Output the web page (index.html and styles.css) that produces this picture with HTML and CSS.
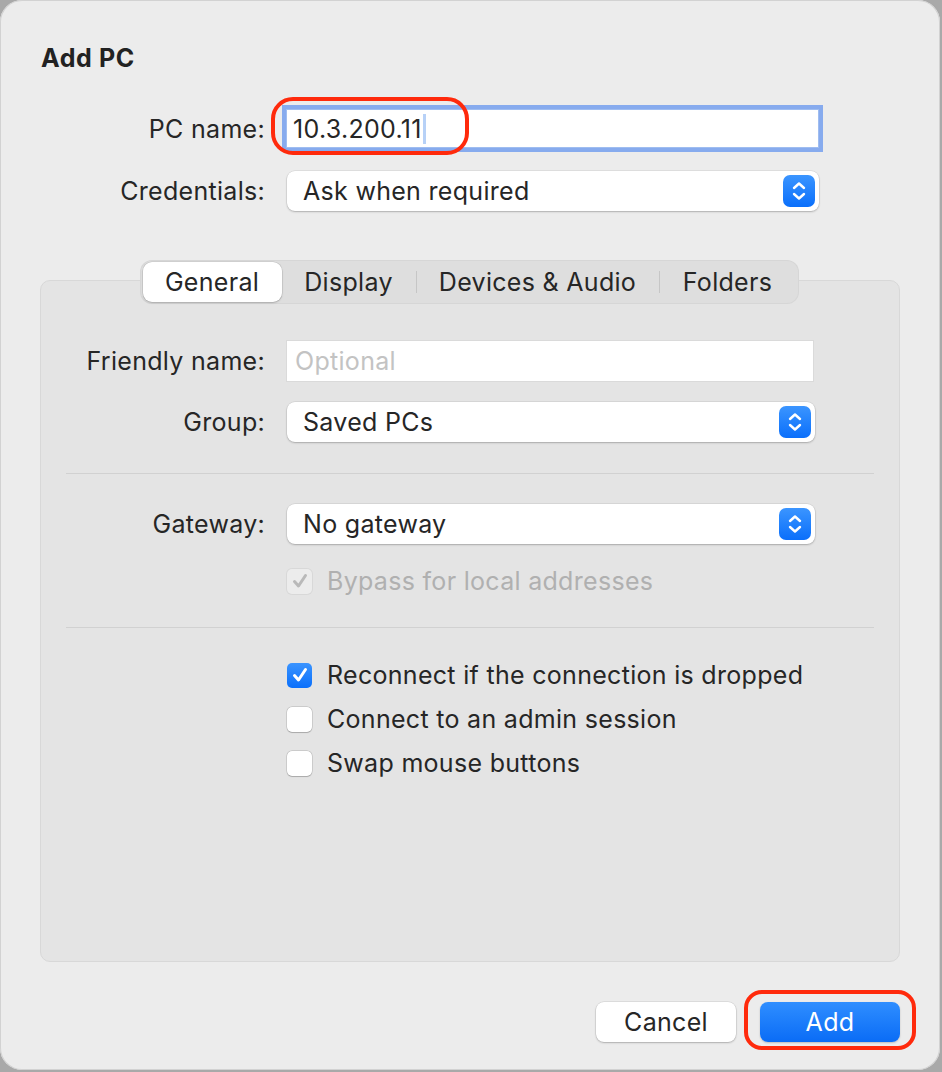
FILE: index.html
```html
<!DOCTYPE html>
<html>
<head>
<meta charset="utf-8">
<link rel="stylesheet" href="styles.css">
</head>
<body>
<div class="window">
  <div class="title">Add PC</div>

  <div class="row row-pc">
    <div class="label">PC name:</div>
    <div class="field-wrap">
      <div class="textfield focused"><span class="val">10.3.200.11</span><span class="caret"></span></div>
      <div class="annot annot-pc"></div>
    </div>
  </div>

  <div class="row row-cred">
    <div class="label">Credentials:</div>
    <div class="popup popup-wide">
      <span class="popup-text">Ask when required</span>
      <span class="stepper"><svg width="16" height="22" viewBox="0 0 16 22"><path d="M3 8 L8 3.5 L13 8" fill="none" stroke="#fff" stroke-width="2.4" stroke-linecap="round" stroke-linejoin="round"/><path d="M3 14 L8 18.5 L13 14" fill="none" stroke="#fff" stroke-width="2.4" stroke-linecap="round" stroke-linejoin="round"/></svg></span>
    </div>
  </div>

  <div class="panel">
    <div class="tabs">
      <div class="tab tab-general selected">General</div>
      <div class="tab tab-display">Display</div>
      <div class="sep"></div>
      <div class="tab tab-devices">Devices &amp; Audio</div>
      <div class="sep"></div>
      <div class="tab tab-folders">Folders</div>
    </div>

    <div class="prow prow-friendly">
      <div class="plabel">Friendly name:</div>
      <div class="plain-field"><span class="placeholder">Optional</span></div>
    </div>

    <div class="prow prow-group">
      <div class="plabel">Group:</div>
      <div class="popup popup-panel">
        <span class="popup-text">Saved PCs</span>
        <span class="stepper"><svg width="16" height="22" viewBox="0 0 16 22"><path d="M3 8 L8 3.5 L13 8" fill="none" stroke="#fff" stroke-width="2.4" stroke-linecap="round" stroke-linejoin="round"/><path d="M3 14 L8 18.5 L13 14" fill="none" stroke="#fff" stroke-width="2.4" stroke-linecap="round" stroke-linejoin="round"/></svg></span>
      </div>
    </div>

    <div class="divider divider-1"></div>

    <div class="prow prow-gateway">
      <div class="plabel">Gateway:</div>
      <div class="popup popup-panel">
        <span class="popup-text">No gateway</span>
        <span class="stepper"><svg width="16" height="22" viewBox="0 0 16 22"><path d="M3 8 L8 3.5 L13 8" fill="none" stroke="#fff" stroke-width="2.4" stroke-linecap="round" stroke-linejoin="round"/><path d="M3 14 L8 18.5 L13 14" fill="none" stroke="#fff" stroke-width="2.4" stroke-linecap="round" stroke-linejoin="round"/></svg></span>
      </div>
    </div>

    <div class="check-row disabled row-bypass">
      <span class="box checked-disabled"><svg width="20" height="20" viewBox="0 0 20 20"><path d="M4.5 10.5 L8.5 15 L15.5 4.5" fill="none" stroke="#b9b9b9" stroke-width="3" stroke-linecap="round" stroke-linejoin="round"/></svg></span>
      <span class="check-text">Bypass for local addresses</span>
    </div>

    <div class="divider divider-2"></div>

    <div class="check-row row-reconnect">
      <span class="box checked"><svg width="20" height="20" viewBox="0 0 20 20"><path d="M4.5 10.5 L8.5 15 L15.5 4.5" fill="none" stroke="#fff" stroke-width="3" stroke-linecap="round" stroke-linejoin="round"/></svg></span>
      <span class="check-text">Reconnect if the connection is dropped</span>
    </div>
    <div class="check-row row-next">
      <span class="box"></span>
      <span class="check-text">Connect to an admin session</span>
    </div>
    <div class="check-row row-next">
      <span class="box"></span>
      <span class="check-text">Swap mouse buttons</span>
    </div>
  </div>

  <div class="buttons">
    <div class="btn btn-cancel">Cancel</div>
    <div class="btn-wrap">
      <div class="btn btn-add">Add</div>
      <div class="annot annot-add"></div>
    </div>
  </div>
</div>
</body>
</html>
```

FILE: styles.css
```css
html, body {
  margin: 0;
  padding: 0;
}
body {
  width: 942px;
  height: 1072px;
  background: #a9a9a9;
  font-family: "Inter", "Noto Sans", "Liberation Sans", sans-serif;
  color: #262626;
  overflow: hidden;
  letter-spacing: 0.3px;
}
.window {
  width: 940px;
  height: 1070px;
  background: #ececec;
  border-radius: 22px;
  box-shadow: inset 0 0 0 1px #d2d2d2;
  display: flex;
  flex-direction: column;
  box-sizing: border-box;
}
.title {
  margin: 42px 0 0 41px;
  font-size: 25px;
  font-weight: 700;
  line-height: 32px;
  color: #222;
  letter-spacing: 0.6px;
}
.row {
  display: flex;
  align-items: center;
}
.row-pc {
  margin-top: 36px;
  height: 37px;
}
.row-cred {
  margin-top: 24px;
  height: 40px;
}
.label {
  width: 265px;
  text-align: right;
  font-size: 25px;
  line-height: 30px;
  margin-right: 22px;
  flex: none;
}
.field-wrap {
  position: relative;
}
.textfield {
  width: 531px;
  height: 37px;
  box-sizing: border-box;
  background: #fff;
  display: flex;
  align-items: center;
  padding-left: 6px;
  font-size: 25px;
}
.textfield.focused {
  box-shadow: 0 0 0 1px #9fbdf0, 0 0 0 5px #87abee;
}
.caret {
  display: inline-block;
  width: 3px;
  height: 30px;
  background: #b7d1f7;
  margin-left: 1px;
}
.annot {
  position: absolute;
  border: 4px solid #ff2a0c;
  box-sizing: border-box;
  pointer-events: none;
}
.annot-pc {
  left: -16px;
  top: -13px;
  width: 198px;
  height: 58px;
  border-radius: 22px;
}
.popup {
  height: 40px;
  box-sizing: border-box;
  background: #fff;
  border-radius: 8px;
  box-shadow: 0 0 0 0.5px rgba(0,0,0,0.10), 0 1px 2px rgba(0,0,0,0.22);
  display: flex;
  align-items: center;
  justify-content: space-between;
  padding: 0 4px 0 16px;
}
.popup-wide {
  width: 532px;
}
.popup-panel {
  width: 528px;
}
.popup-text {
  font-size: 25px;
  line-height: 30px;
}
.stepper {
  width: 32px;
  height: 32px;
  border-radius: 7px;
  background: linear-gradient(#3b95ff, #0a6ffb);
  display: flex;
  align-items: center;
  justify-content: center;
}
.panel {
  margin: 69px 0 0 40px;
  width: 860px;
  height: 682px;
  box-sizing: border-box;
  background: #e4e4e4;
  border: 1px solid #d8d8d8;
  border-radius: 10px;
  display: flex;
  flex-direction: column;
}
.tabs {
  align-self: center;
  margin-top: -20px;
  margin-left: -2px;
  height: 42px;
  box-sizing: border-box;
  padding: 1px 2px;
  background: #dedede;
  border-radius: 11px;
  box-shadow: 0 0 0 1px #d6d6d6;
  display: flex;
  align-items: center;
}
.tab {
  height: 40px;
  display: flex;
  align-items: center;
  justify-content: center;
  font-size: 25px;
  color: #262626;
  flex: none;
}
.tab-general { width: 139px; }
.tab-display { width: 134px; }
.tab-devices { width: 242px; }
.tab-folders { width: 136px; }
.tab.selected {
  background: #fff;
  border-radius: 9px;
  box-shadow: 0 0 0 0.5px rgba(0,0,0,0.12), 0 1px 2px rgba(0,0,0,0.18);
}
.sep {
  width: 1px;
  height: 22px;
  background: #c6c6c6;
  flex: none;
}
.prow {
  display: flex;
  align-items: center;
  height: 40px;
}
.prow-friendly { margin-top: 38px; }
.prow-group { margin-top: 21px; }
.prow-gateway { margin-top: 30px; }
.plabel {
  width: 224px;
  text-align: right;
  margin-right: 22px;
  font-size: 25px;
  line-height: 30px;
  flex: none;
}
.plain-field {
  width: 526px;
  height: 40px;
  box-sizing: border-box;
  background: #fff;
  box-shadow: 0 0 0 1px #dadada, 0 1px 0 0 #bdbdbd;
  display: flex;
  align-items: center;
  padding-left: 8px;
}
.placeholder {
  font-size: 25px;
  color: #c3c3c3;
}
.divider {
  height: 1px;
  background: #d1d1d1;
  margin: 0 25px;
}
.divider-1 { margin-top: 31px; }
.divider-2 { margin-top: 34px; }
.check-row {
  display: flex;
  align-items: center;
  height: 24px;
  padding-left: 246px;
}
.row-bypass { margin-top: 25px; }
.row-reconnect { margin-top: 35px; }
.row-next { margin-top: 20px; }
.box {
  width: 25px;
  height: 25px;
  box-sizing: border-box;
  border-radius: 5px;
  background: #fff;
  box-shadow: 0 0 0 0.5px rgba(0,0,0,0.18), 0 0.5px 1px rgba(0,0,0,0.18);
  margin-right: 15px;
  flex: none;
  display: flex;
  align-items: center;
  justify-content: center;
}
.box.checked {
  background: linear-gradient(#3a94ff, #0a6ffb);
  box-shadow: none;
}
.box.checked-disabled {
  background: #ececec;
  box-shadow: 0 0 0 1px #d8d8d8;
}
.check-text {
  font-size: 25px;
  line-height: 30px;
  white-space: nowrap;
}
.disabled .check-text {
  color: #b0b0b0;
}
.buttons {
  margin-top: 40px;
  display: flex;
  justify-content: flex-end;
  padding-right: 40px;
  gap: 24px;
}
.btn-wrap {
  position: relative;
}
.btn {
  width: 140px;
  height: 40px;
  border-radius: 8px;
  display: flex;
  align-items: center;
  justify-content: center;
  font-size: 25px;
  box-sizing: border-box;
}
.btn-cancel {
  background: #fff;
  color: #262626;
  box-shadow: 0 0 0 0.5px rgba(0,0,0,0.12), 0 1px 2px rgba(0,0,0,0.22);
}
.btn-add {
  background: linear-gradient(#2f8eff, #0a6cf6);
  color: #fff;
  box-shadow: 0 1px 2px rgba(0,0,0,0.2);
}
.annot-add {
  left: -16px;
  top: -12px;
  width: 172px;
  height: 60px;
  border-radius: 18px;
}
```
